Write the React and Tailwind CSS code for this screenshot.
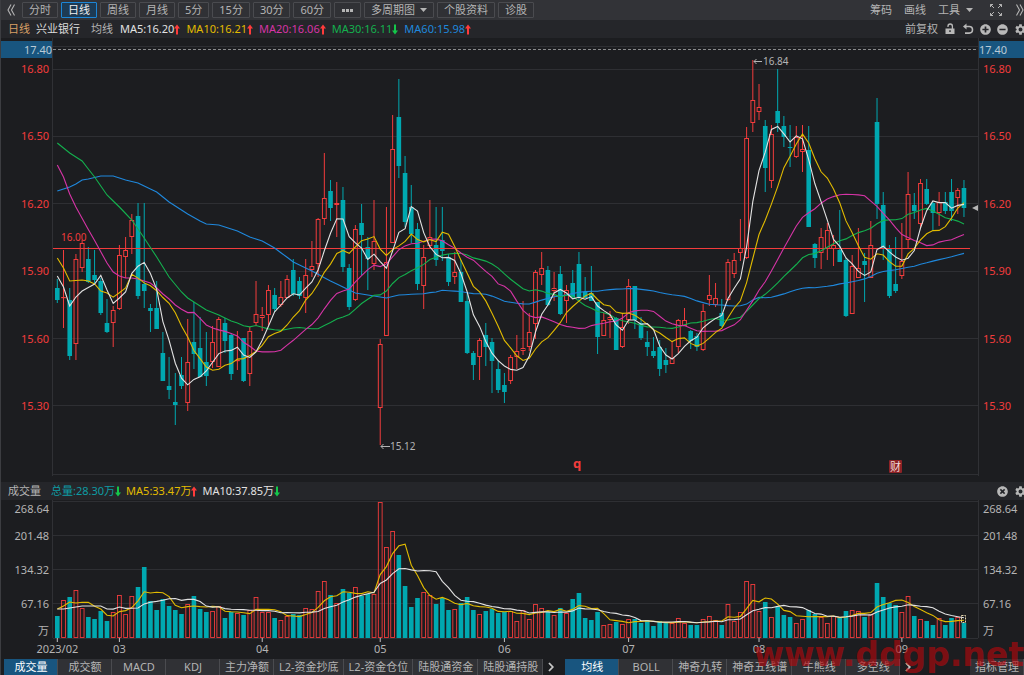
import React from "react";
import { FaPlusCircle, FaMinusCircle, FaTimesCircle } from "react-icons/fa";
import { MdSettings } from "react-icons/md";

const RED = "#f23c3c";
const TEAL = "#00a8b0";
const STEP = 6.21;
const xAt = (i) => 57.3 + STEP * i;

// direction, high, body top, body bottom, low (chart units); u = rising, d = falling
const CANDLES = `
d 279 288 300 303|u 250 297 297 328|d 288 300 356 360|u 254 259 344 360|u 240 243 268 272|d 247 259 282 283|d 250 275 280 283|d 278 281 313 315|d 299 323 332 333|u 306 310 323 347|
u 245 255 309 310|u 237 250 257 278|u 214 220 237 254|d 203 216 296 299|d 203 284 291 308|d 304 308 311 332|d 281 308 329 329|d 332 353 381 381|d 357 386 390 399|d 373 402 405 425|
d 357 375 386 389|u 319 362 403 411|d 302 342 354 369|d 317 348 377 377|d 332 362 376 386|u 326 342 362 368|u 317 319 367 367|d 318 323 341 353|d 333 335 374 380|u 331 360 361 370|
d 338 338 381 382|u 327 331 374 386|u 281 314 323 326|u 307 315 318 331|u 285 290 315 325|d 288 295 309 312|u 281 297 305 307|u 275 279 298 298|d 259 270 294 296|d 277 281 296 299|
u 259 275 298 313|u 241 266 270 277|u 218 219 264 277|u 153 198 219 225|d 180 191 208 221|u 182 203 205 237|d 187 200 267 272|d 264 268 307 310|u 225 229 300 301|d 204 223 235 275|
d 237 247 259 290|u 200 241 264 270|u 339 344 408 445|u 207 262 336 336|u 115 149 243 243|d 79 117 166 178|d 156 173 222 227|d 185 207 234 243|d 223 229 284 290|u 245 257 286 309|
u 200 237 246 248|d 207 245 260 266|d 207 240 251 261|d 254 257 282 286|u 252 272 277 284|d 260 272 302 302|d 293 301 353 354|d 351 353 365 380|u 338 340 357 380|d 323 335 347 366|
d 338 342 361 393|d 360 369 390 393|d 373 385 392 403|u 355 357 381 384|u 335 351 357 369|u 301 348 351 355|u 313 332 347 351|u 270 272 324 339|u 252 268 275 285|d 266 270 305 306|
u 272 288 291 301|d 266 274 314 315|u 285 290 301 323|d 270 283 297 298|d 252 264 297 301|d 277 292 298 298|d 266 293 301 301|d 302 302 337 354|u 313 320 336 336|u 311 317 320 338|
d 317 318 350 350|u 313 327 347 348|u 279 286 320 324|d 286 286 320 329|d 317 323 338 340|d 331 342 347 356|d 337 351 356 358|d 340 347 369 376|d 348 360 365 373|u 341 358 364 364|
u 319 320 347 353|u 308 320 326 326|d 330 331 341 349|d 333 336 347 351|u 304 311 350 351|u 275 295 300 306|u 283 298 305 307|d 299 313 326 327|u 259 262 300 301|u 253 260 274 278|
u 219 248 253 261|u 127 138 258 259|u 60 100 123 132|u 84 107 112 120|d 120 126 168 192|u 125 134 181 188|d 69 111 123 132|d 116 126 137 147|d 125 147 148 167|u 126 137 157 158|
u 125 149 152 172|d 126 150 227 227|d 243 244 258 268|u 228 237 253 269|u 223 230 249 260|u 235 245 249 266|d 210 250 262 262|d 258 260 316 317|u 255 266 314 314|u 228 268 278 278|
d 253 261 265 302|u 221 245 278 278|d 98 122 204 219|d 192 205 249 260|d 245 249 296 298|d 237 284 291 293|u 223 261 276 279|u 172 194 240 248|d 193 205 211 219|u 179 183 224 228|
d 179 189 204 205|d 202 203 213 231|u 192 202 213 226|d 192 202 211 214|d 179 192 211 221|u 188 190 198 214|d 180 188 208 217`
  .replace(/\n/g, "")
  .split("|")
  .map((row) => {
    const [dir, ...v] = row.split(" ");
    const [high, top, bottom, low] = v.map(Number);
    return { up: dir === "u", high, top, bottom, low, close: dir === "u" ? top : bottom };
  });

const VOLUME_TOPS = [
  616, 600, 597, 590, 608, 617, 619, 611, 621, 612, 595, 614, 596, 587, 567, 601, 610, 599, 606, 610,
  614, 604, 596, 609, 612, 611, 606, 618, 612, 613, 615, 610, 597, 612, 612, 618, 620, 616, 614, 615,
  608, 609, 591, 581, 595, 603, 589, 593, 587, 596, 594, 594, 502, 547, 531, 555, 586, 607, 598, 592,
  595, 604, 598, 610, 609, 603, 597, 610, 614, 611, 609, 613, 612, 611, 621, 610, 619, 604, 608, 612,
  615, 608, 613, 599, 593, 618, 620, 612, 625, 624, 622, 624, 619, 619, 623, 620, 626, 621, 623, 623,
  618, 623, 625, 625, 619, 616, 620, 625, 604, 621, 612, 581, 584, 611, 602, 617, 607, 615, 617, 623,
  619, 610, 614, 617, 623, 616, 618, 611, 610, 611, 617, 614, 583, 597, 603, 605, 612, 596, 616, 619,
  621, 625, 618, 625, 618, 617, 623,
];

// Moving average; the knots [index, value] give the part before a full window is available
function average(values, size, knots) {
  return values.map((_, i) => {
    if (i >= size - 1) {
      return values.slice(i - size + 1, i + 1).reduce((a, b) => a + b, 0) / size;
    }
    const k = knots.findIndex((p) => p[0] >= i);
    if (k < 0) return knots[knots.length - 1][1];
    if (knots[k][0] === i) return knots[k][1];
    const [x0, y0] = knots[k - 1];
    const [x1, y1] = knots[k];
    return y0 + ((y1 - y0) * (i - x0)) / (x1 - x0);
  });
}

const closes = CANDLES.map((c) => c.close);
const PRICE_LINES = [
  ["#1f88dc", average(closes, 60, [[0, 191], [1, 189], [2, 187], [3, 184], [4, 180], [5, 179], [7, 176], [9, 176], [11, 180], [13, 183], [15, 189], [16, 192], [18, 202], [21, 214], [23, 221], [24, 224], [26, 225], [29, 231], [31, 237], [33, 241], [35, 248], [38, 262], [41, 271], [44, 281], [47, 290], [48, 293], [51, 296], [53, 298], [55, 295], [58, 294]])],
  ["#14b04e", average(closes, 30, [[0, 143], [1, 148], [2, 153], [3, 157], [4, 161], [6, 177], [8, 195], [10, 207], [12, 220], [14, 238], [16, 257], [18, 277], [20, 292], [21, 298], [22, 302], [24, 310], [26, 315], [28, 321]])],
  ["#d634a6", average(closes, 20, [[0, 165], [1, 177], [2, 194], [3, 207], [8, 263], [9, 272], [10, 276], [11, 278], [12, 278], [13, 279], [14, 281], [15, 283], [16, 288], [17, 294], [18, 299]])],
  ["#e2bb00", average(closes, 10, [[0, 258], [1, 268], [2, 281], [4, 280], [5, 281], [6, 284], [7, 291], [8, 293]])],
  ["#e2e2e2", average(closes, 5, [[0, 276], [1, 287], [2, 306], [3, 297]])],
];
const VOLUME_LINES = [
  ["#e2bb00", average(VOLUME_TOPS, 5, [[0, 609], [1, 606], [2, 602], [3, 603]])],
  ["#e2e2e2", average(VOLUME_TOPS, 10, [[0, 609], [1, 609], [2, 608], [3, 607], [4, 606], [7, 606], [8, 609]])],
];

const points = (values) => values.map((v, i) => `${xAt(i).toFixed(1)},${v.toFixed(1)}`).join(" ");

const SVG_FONT = "font-['Noto_Sans','Noto_Sans_CJK_SC',sans-serif]";

function PriceChart() {
  return (
    <svg viewBox="53 38 925 438" preserveAspectRatio="xMinYMin meet" className={"block h-[438px] w-full " + SVG_FONT} role="img" aria-label="日线">
      <g stroke="#2e2f33">
        {[46.5, 69.5, 136.5, 203.5, 271.5, 338.5, 405.5, 474.5].map((y) => (
          <line key={y} x1="53" x2="5000" y1={y} y2={y} />
        ))}
      </g>
      <line x1="53" x2="5000" y1="49.5" y2="49.5" stroke="#8a8b8d" strokeDasharray="3 2" />
      {CANDLES.map((c, i) => {
        const x = xAt(i);
        if (!c.up) {
          return (
            <g key={i} fill={TEAL}>
              <rect x={x - 0.5} y={c.high} width="1" height={c.low - c.high} />
              <rect x={x - 2.3} y={c.top} width="4.6" height={Math.max(1, c.bottom - c.top)} />
            </g>
          );
        }
        return (
          <g key={i} stroke={RED} fill="none">
            <path d={`M${x} ${c.high}V${c.top}M${x} ${c.bottom}V${c.low}`} />
            <rect x={x - 1.9} y={c.top + 0.5} width="3.8" height={Math.max(0.2, c.bottom - c.top - 1)} />
          </g>
        );
      })}
      <line x1="53" x2="970" y1="248.5" y2="248.5" stroke={RED} />
      {PRICE_LINES.map(([color, values]) => (
        <polyline key={color} points={points(values)} fill="none" stroke={color} strokeWidth="1.1" />
      ))}
      <text x="61" y="241" fontSize="10" fill={RED}>16.00</text>
      <g stroke="#b4b4b4" fill="none">
        <path d="M754 61.5h8M756.5 59l-2.5 2.5 2.5 2.5" />
        <path d="M381 446.5h9M383.5 444l-2.5 2.5 2.5 2.5" />
      </g>
      <g fontSize="10" fill="#b4b4b4">
        <text x="763" y="65">16.84</text>
        <text x="390" y="450">15.12</text>
      </g>
      <text x="573" y="468" fontSize="13" fontWeight="700" fill={RED}>q</text>
      <rect x="889" y="460" width="13" height="13" rx="1" fill="#8d2226" />
      <text x="890" y="471" fontSize="11" fill="#f2dada">财</text>
      <path d="M972 208l6-3v6z" fill="#b4b4b4" />
    </svg>
  );
}

const MONTHS = [[0, "2023/02"], [10, "03"], [33, "04"], [52, "05"], [72, "06"], [92, "07"], [113, "08"], [136, "09"]];

function VolumeChart() {
  return (
    <svg viewBox="53 500 925 158" preserveAspectRatio="xMinYMin meet" className={"block h-[158px] w-full overflow-visible " + SVG_FONT} role="img" aria-label="成交量">
      <g stroke="#2e2f33">
        {[501.5, 535.5, 569.5, 603.5, 638.5].map((y) => (
          <line key={y} x1="53" x2="978" y1={y} y2={y} />
        ))}
      </g>
      {VOLUME_TOPS.map((top, i) =>
        CANDLES[i].up ? (
          <rect key={i} x={xAt(i) - 1.9} y={top + 0.5} width="3.8" height={637 - top} fill="none" stroke={RED} strokeWidth="0.9" />
        ) : (
          <rect key={i} x={xAt(i) - 2.3} y={top} width="4.6" height={638 - top} fill={TEAL} />
        )
      )}
      {VOLUME_LINES.map(([color, values]) => (
        <polyline key={color} points={points(values)} fill="none" stroke={color} strokeWidth="1.1" />
      ))}
      <rect x="961.5" y="615.5" width="4" height="7" fill="none" stroke="#e8d9b0" strokeDasharray="2 1" />
      {MONTHS.map(([i, label]) => (
        <g key={label}>
          <line x1={xAt(i)} x2={xAt(i)} y1="638" y2="642" stroke="#c0c0c0" />
          <text x={xAt(i)} y="653" fontSize="11" textAnchor="middle" fill="#b4b4b4">{label}</text>
        </g>
      ))}
    </svg>
  );
}

function Arrow({ up }) {
  return (
    <svg viewBox="0 0 6 11" className="h-[11px] w-[6px]" fill={up ? "#ff3b3b" : "#14c74a"} aria-hidden="true">
      <path d={up ? "M3 0.5L6 4.5H4V10.5H2V4.5H0z" : "M3 10.5L6 6.5H4V0.5H2V6.5H0z"} />
    </svg>
  );
}

function Reading({ children, up, className }) {
  return (
    <span className={"flex items-center " + className}>
      {children}
      <Arrow up={up} />
    </span>
  );
}

function Chevrons({ right }) {
  return (
    <svg viewBox="0 0 8 12" className="h-3 w-2" fill="none" stroke="#b4b4b4" strokeWidth="1.1" aria-hidden="true">
      <path d={right ? "M0.5 0.5L3.5 6L0.5 11.5M4 0.5L7 6L4 11.5" : "M4 0.5L1 6L4 11.5M7.5 0.5L4.5 6L7.5 11.5"} />
    </svg>
  );
}

function Caret() {
  return (
    <svg viewBox="0 0 7 4" className="h-1 w-[7px]" fill="#b4b4b4" aria-hidden="true">
      <path d="M0 0H7L3.5 4z" />
    </svg>
  );
}

function ToolButton({ active, children, label }) {
  return (
    <button
      type="button"
      aria-label={label}
      className={
        "flex h-4 shrink-0 items-center gap-[5px] rounded-[1px] border px-1.5 " +
        (active ? "border-[#1c86d6] bg-[#1d3b54] text-[#f0f0f0]" : "border-[#4a4b4f] bg-[#303135]")
      }
    >
      {children}
    </button>
  );
}

function TabButton({ active, children }) {
  return (
    <button
      type="button"
      className={
        "h-4 min-w-[54px] shrink-0 border-r border-[#4a4b4f] pr-1 pl-[5px] leading-4 whitespace-nowrap " +
        (active ? "bg-[#18557f] text-white" : "bg-[#303135]")
      }
    >
      {children}
    </button>
  );
}

function MoreTabs() {
  return (
    <button type="button" aria-label="更多" className="flex h-4 w-4 shrink-0 items-center justify-center">
      <svg viewBox="0 0 6 10" className="h-[10px] w-[6px]" fill="none" stroke="#c8c8c8" strokeWidth="1.8" aria-hidden="true">
        <path d="M1 1L4.8 5L1 9" />
      </svg>
    </button>
  );
}

function PriceAxis({ right }) {
  return (
    <div className={"shrink-0 pt-[3px] " + (right ? "w-[46px] border-l border-[#303135]" : "w-[52px] border-r border-[#303135] text-right")}>
      <div className="h-[17px] bg-[#18557f] leading-[17px] text-[#b9cad6]">17.40</div>
      <div className={"flex h-[357px] flex-col justify-between pt-0.5 leading-[18px] text-[#f23c3c] " + (right ? "pl-1" : "pr-[3px]")}>
        {["16.80", "16.50", "16.20", "15.90", "15.60", "15.30"].map((p) => (
          <div key={p}>{p}</div>
        ))}
      </div>
    </div>
  );
}

function VolumeAxis({ right }) {
  return (
    <div className={"h-[138px] shrink-0 leading-[18px] " + (right ? "w-[46px] border-l border-[#303135] pl-1" : "w-[52px] border-r border-[#303135] pr-[3px] text-right")}>
      <div className="h-[27px]">268.64</div>
      <div className="h-[34px]">201.48</div>
      <div className="h-[34px]">134.32</div>
      <div className="h-[27px]">67.16</div>
      <div className="h-4">万</div>
    </div>
  );
}

export default function App() {
  return (
    <div className="relative overflow-hidden border-l border-[#3c3d41] bg-[#1c1d20] font-['Noto_Sans','Noto_Sans_CJK_SC',sans-serif] text-[11px] leading-4 text-[#b4b4b4]">
      <nav className="flex h-5 items-center overflow-hidden bg-[#323337] pl-1.5">
        <button type="button" aria-label="收起" className="mr-[7px] flex h-4 shrink-0 items-center">
          <Chevrons />
        </button>
        <div className="flex gap-[3px]">
          <ToolButton>分时</ToolButton>
          <ToolButton active>日线</ToolButton>
          <ToolButton>周线</ToolButton>
          <ToolButton>月线</ToolButton>
          <ToolButton>5分</ToolButton>
          <ToolButton>15分</ToolButton>
          <ToolButton>30分</ToolButton>
          <ToolButton>60分</ToolButton>
          <ToolButton label="更多周期">
            <svg viewBox="0 0 13 3" className="h-[3px] w-[13px]" fill="#b4b4b4" aria-hidden="true">
              <path d="M1 0h3v3H1zM5 0h3v3H5zM9 0h3v3H9z" />
            </svg>
          </ToolButton>
          <ToolButton>多周期图 <Caret /></ToolButton>
          <ToolButton>个股资料</ToolButton>
          <ToolButton>诊股</ToolButton>
        </div>
        <div className="ml-auto flex shrink-0 items-center">
          <button type="button" className="mr-3">筹码</button>
          <button type="button" className="mr-3">画线</button>
          <button type="button" className="mr-4 flex items-center gap-1.5">工具 <Caret /></button>
          <button type="button" aria-label="全屏" className="mr-[13px]">
            <svg viewBox="0 0 14 14" className="size-3.5" fill="none" stroke="#b4b4b4" aria-hidden="true">
              <path d="M1.5 4V1.5H4M1.5 1.5l3.5 3.5M10 1.5h2.5V4M12.5 1.5L9 5M1.5 10v2.5H4M1.5 12.5L5 9M12.5 10v2.5H10M12.5 12.5L9 9" />
            </svg>
          </button>
          <button type="button" aria-label="展开" className="flex h-4 items-center">
            <Chevrons right />
          </button>
        </div>
      </nav>

      <div className="flex h-[18px] items-center bg-[#25262a] pl-[7px]">
        <span className="mr-1.5 text-[#d9a066]">日线</span>
        <span className="mr-[11px] text-[#dcdcdc]">兴业银行</span>
        <span className="mr-[7px]">均线</span>
        <div className="flex gap-1.5">
          <Reading up className="text-[#e2e2e2]">MA5:16.20</Reading>
          <Reading up className="text-[#e2bb00]">MA10:16.21</Reading>
          <Reading up className="text-[#d634a6]">MA20:16.06</Reading>
          <Reading className="text-[#14b04e]">MA30:16.11</Reading>
          <Reading up className="text-[#1f88dc]">MA60:15.98</Reading>
        </div>
        <div className="-mr-[3px] ml-auto flex shrink-0 items-center gap-1.5">
          <button type="button">前复权</button>
          <button type="button" aria-label="锁定">
            <svg viewBox="0 0 12 12" className="size-3" aria-hidden="true">
              <path d="M4 4V3.2a2.2 2.2 0 0 1 4.4 0V6" fill="none" stroke="#b8b8b8" strokeWidth="1.3" />
              <path d="M1.5 5.5h9V11h-9zM5.3 7.3v1.8h1.4V7.3z" fill="#b8b8b8" fillRule="evenodd" />
            </svg>
          </button>
          <button type="button" aria-label="撤销">
            <svg viewBox="0 0 12 12" className="size-3" aria-hidden="true">
              <path d="M3 3.5h4.2a3.3 3.3 0 0 1 0 6.600H3" fill="none" stroke="#b8b8b8" strokeWidth="1.6" />
              <path d="M4.5 0.5v6L1 3.5z" fill="#b8b8b8" />
            </svg>
          </button>
          <button type="button" aria-label="放大"><FaPlusCircle className="size-[11px] text-[#b8b8b8]" /></button>
          <button type="button" aria-label="缩小"><FaMinusCircle className="size-[11px] text-[#b8b8b8]" /></button>
          <button type="button" aria-label="设置"><MdSettings className="size-[13px] text-[#b8b8b8]" /></button>
        </div>
      </div>

      <section className="flex">
        <PriceAxis />
        <div className="min-w-0 flex-1"><PriceChart /></div>
        <PriceAxis right />
      </section>

      <div className="mt-1.5 flex h-[18px] items-center bg-[#25262a] pl-[7px]">
        <span className="mr-[10px]">成交量</span>
        <div className="flex gap-[5px]">
          <Reading className="text-[#0e9ba3]">总量:28.30万</Reading>
          <Reading up className="text-[#e2bb00]">MA5:33.47万</Reading>
          <Reading className="text-[#e2e2e2]">MA10:37.85万</Reading>
        </div>
        <div className="-mr-[3px] ml-auto flex shrink-0 items-center gap-1.5">
          <button type="button" aria-label="关闭"><FaTimesCircle className="size-[11px] text-[#b8b8b8]" /></button>
          <button type="button" aria-label="设置"><MdSettings className="size-[13px] text-[#b8b8b8]" /></button>
        </div>
      </div>

      <section className="flex">
        <VolumeAxis />
        <div className="min-w-0 flex-1"><VolumeChart /></div>
        <VolumeAxis right />
      </section>

      <nav className="flex h-[17px] items-center pl-[3px]">
        <TabButton active>成交量</TabButton>
        <TabButton>成交额</TabButton>
        <TabButton>MACD</TabButton>
        <TabButton>KDJ</TabButton>
        <TabButton>主力净额</TabButton>
        <TabButton>L2-资金抄底</TabButton>
        <TabButton>L2-资金仓位</TabButton>
        <TabButton>陆股通资金</TabButton>
        <TabButton>陆股通持股</TabButton>
        <MoreTabs />
        <div className="ml-1.5 flex">
          <TabButton active>均线</TabButton>
          <TabButton>BOLL</TabButton>
          <TabButton>神奇九转</TabButton>
          <TabButton>神奇五线谱</TabButton>
          <TabButton>牛熊线</TabButton>
          <TabButton>多空线</TabButton>
          <MoreTabs />
        </div>
        <div className="ml-auto flex">
          <TabButton>指标管理</TabButton>
        </div>
      </nav>

      <div className="pointer-events-none absolute right-0 bottom-0 font-['DejaVu_Sans',sans-serif] text-[33px] leading-10 font-bold text-[#b4080c]/65">
        www.ddgp.net
      </div>
    </div>
  );
}
